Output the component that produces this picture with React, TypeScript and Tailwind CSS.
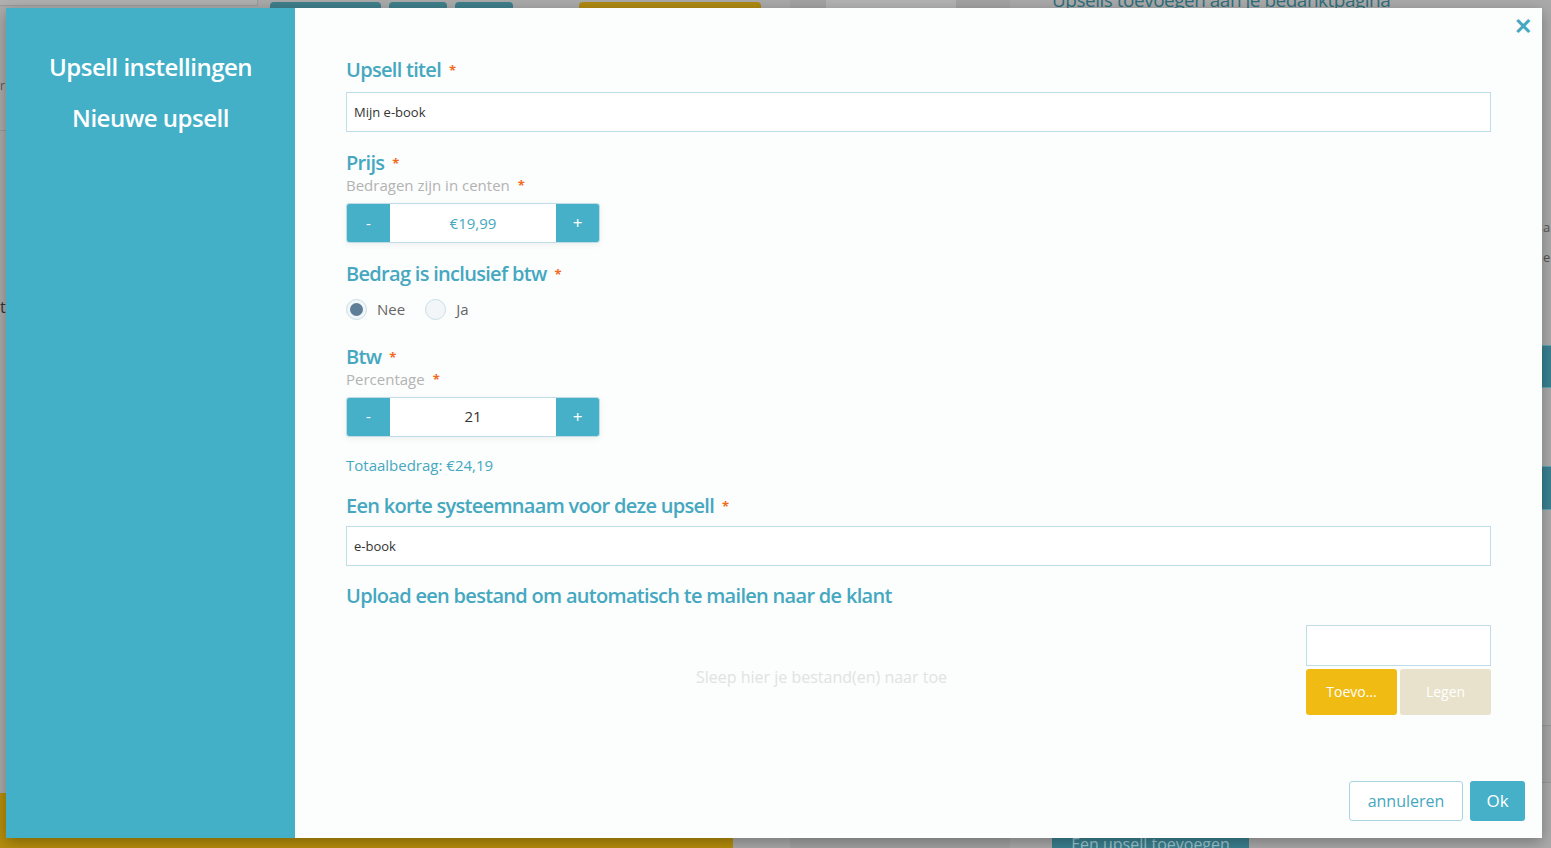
import React from "react";

const font = { fontFamily: '"Open Sans", "Noto Sans", sans-serif' };

function Star() {
  return <span className="ml-2 text-[13px] font-bold text-[#f26b1d] align-top">*</span>;
}

function Label({ children, required = true }: { children: React.ReactNode; required?: boolean }) {
  return (
    <div className="text-[20px] font-semibold leading-[28px] text-[#45a8c0] tracking-[-0.7px]">
      {children}
      {required && <Star />}
    </div>
  );
}

function Hint({ children }: { children: React.ReactNode }) {
  return (
    <div className="-mt-[2px] text-[15px] leading-[20px] text-[#b3b3b3]">
      {children}
      <Star />
    </div>
  );
}

function Spinner({ value, teal }: { value: string; teal?: boolean }) {
  return (
    <div className="flex h-10 w-[254px] overflow-hidden rounded-[3px] border border-[#bfdde6] shadow-[0_2px_6px_rgba(0,0,0,0.06)]">
      <button className="w-[43px] bg-[#45b0c8] text-[15px] text-white">-</button>
      <div
        className={`flex flex-1 items-center justify-center bg-white text-[15px] ${
          teal ? "text-[#45a8c0]" : "text-[#333]"
        }`}
      >
        {value}
      </div>
      <button className="w-[43px] bg-[#45b0c8] text-[17px] text-white">+</button>
    </div>
  );
}

function Backdrop() {
  return (
    <>
      {/* page behind the overlay */}
      <div className="absolute left-0 top-0 h-[6px] w-[258px] border-b border-r border-[#9a9a9a] bg-[#b0b0b0]" />
      <div className="absolute left-[270px] top-[2px] h-[8px] w-[111px] rounded-t-[4px] bg-[#3f7f8b]" />
      <div className="absolute left-[389px] top-[2px] h-[8px] w-[58px] rounded-t-[4px] bg-[#3f7f8b]" />
      <div className="absolute left-[455px] top-[2px] h-[8px] w-[58px] rounded-t-[4px] bg-[#3f7f8b]" />
      <div className="absolute left-[579px] top-[2px] h-[8px] w-[182px] rounded-t-[4px] bg-[#af8a12]" />
      <div className="absolute left-[790px] top-0 h-[8px] w-[220px] bg-[#a3a3a3]" />
      <div className="absolute left-[826px] top-0 h-[8px] w-[130px] bg-[#b3b3b3]" />
      <div className="absolute left-[1052px] top-[-11px] text-[19px] leading-[22px] tracking-[-0.5px] text-[#2f6f7c]">
        Upsells toevoegen aan je bedanktpagina
      </div>
      <div className="absolute left-0 top-[130px] h-px w-[6px] bg-[#999]" />
      <div className="absolute left-0 top-[77px] text-[12px] text-[#555]">r</div>
      <div className="absolute left-0 top-[295px] text-[16px] text-[#333]">t</div>
      <div className="absolute left-0 top-[793px] h-[55px] w-[733px] bg-[#b58e0b]" />
      <div className="absolute left-[790px] top-[838px] h-[10px] w-[220px] bg-[#a3a3a3]" />
      <div className="absolute left-[1052px] top-[836px] flex h-[16px] w-[197px] justify-center bg-[#3a8190] text-[16px] leading-[16px] text-[#9fc7cf]">
        Een upsell toevoegen
      </div>
      <div className="absolute left-[1542px] top-[345px] h-[43px] w-[9px] border-y border-[#5fa6b5] bg-[#3a8190]" />
      <div className="absolute left-[1542px] top-[466px] h-[44px] w-[9px] border-y border-[#5fa6b5] bg-[#3a8190]" />
      <div className="absolute left-[1543px] top-[218px] text-[13px] text-[#555]">a</div>
      <div className="absolute left-[1543px] top-[248px] text-[13px] text-[#555]">e</div>
      <div className="absolute left-[1542px] top-[725px] h-[58px] w-[9px] border-y border-[#999] bg-[#a6a6a6]" />
    </>
  );
}

export default function App() {
  return (
    <div className="relative h-[848px] w-full overflow-hidden bg-[#aaaaaa]" style={font}>
      <Backdrop />

      <div className="absolute left-[6px] top-[8px] flex h-[830px] w-[1536px] bg-[#fcfdfd] shadow-[0_4px_14px_rgba(0,0,0,0.3)]">
        {/* side panel */}
        <aside className="flex w-[289px] shrink-0 flex-col items-center bg-[#43b0c8] pt-[42px] text-white">
          <h2 className="text-[24px] font-semibold leading-[34px] tracking-[-0.5px]">Upsell instellingen</h2>
          <h2 className="mt-[17px] text-[24px] font-semibold leading-[34px] tracking-[-0.5px]">Nieuwe upsell</h2>
        </aside>

        {/* form */}
        <main className="relative flex flex-1 flex-col px-[51px] pt-[48px]">
          <button className="absolute right-[10px] top-[6px] text-[22px] font-bold leading-none text-[#45a8c0]">
            ✕
          </button>

          <Label>Upsell titel</Label>
          <input
            readOnly
            value="Mijn e-book"
            className="mt-[8px] h-10 w-full border border-[#bfdde6] bg-white px-[7px] text-[13px] text-[#333] outline-none"
          />

          <div className="mt-[17px]">
            <Label>Prijs</Label>
          </div>
          <Hint>Bedragen zijn in centen</Hint>
          <div className="mt-[8px]">
            <Spinner value="€19,99" teal />
          </div>

          <div className="mt-[17px]">
            <Label>Bedrag is inclusief btw</Label>
          </div>
          <div className="mt-[10px] flex items-center text-[15px] text-[#666]">
            <span className="flex h-[21px] w-[21px] items-center justify-center rounded-full border border-[#c8dfe6] bg-[#f2f6f8]">
              <span className="h-[13px] w-[13px] rounded-full bg-[#5e7d96]" />
            </span>
            <span className="ml-[10px]">Nee</span>
            <span className="ml-[20px] h-[21px] w-[21px] rounded-full border border-[#c8dfe6] bg-[#f2f6f8]" />
            <span className="ml-[10px]">Ja</span>
          </div>

          <div className="mt-[22px]">
            <Label>Btw</Label>
          </div>
          <Hint>Percentage</Hint>
          <div className="mt-[8px]">
            <Spinner value="21" />
          </div>

          <div className="mt-[18px] text-[15px] leading-[20px] text-[#45a8c0]">Totaalbedrag: €24,19</div>

          <div className="mt-[17px]">
            <Label>Een korte systeemnaam voor deze upsell</Label>
          </div>
          <input
            readOnly
            value="e-book"
            className="mt-[6px] h-10 w-full border border-[#bfdde6] bg-white px-[7px] text-[13px] text-[#333] outline-none"
          />

          <div className="mt-[16px]">
            <Label required={false}>Upload een bestand om automatisch te mailen naar de klant</Label>
          </div>

          <div className="mt-[15px] flex">
            <div className="flex flex-1 items-center justify-center pt-[14px] text-[16px] text-[#e2e2e2]">
              Sleep hier je bestand(en) naar toe
            </div>
            <div className="ml-[9px] w-[185px]">
              <div className="h-[41px] border border-[#bfdde6] bg-white" />
              <div className="mt-[3px] flex gap-[3px]">
                <button className="h-[46px] flex-1 rounded-[3px] bg-[#f0bb12] text-[14px] text-white">Toevo...</button>
                <button className="h-[46px] flex-1 rounded-[3px] bg-[#e8e1cb] text-[14px] text-white">Legen</button>
              </div>
            </div>
          </div>

          <div className="mt-auto mb-[17px] flex justify-end gap-[7px] -mr-[34px]">
            <button className="h-10 w-[114px] rounded-[3px] border border-[#a9d5e0] bg-white text-[16px] text-[#45a8c0]">
              annuleren
            </button>
            <button className="h-10 w-[55px] rounded-[3px] bg-[#45b0c8] text-[17px] text-white">Ok</button>
          </div>
        </main>
      </div>
    </div>
  );
}
